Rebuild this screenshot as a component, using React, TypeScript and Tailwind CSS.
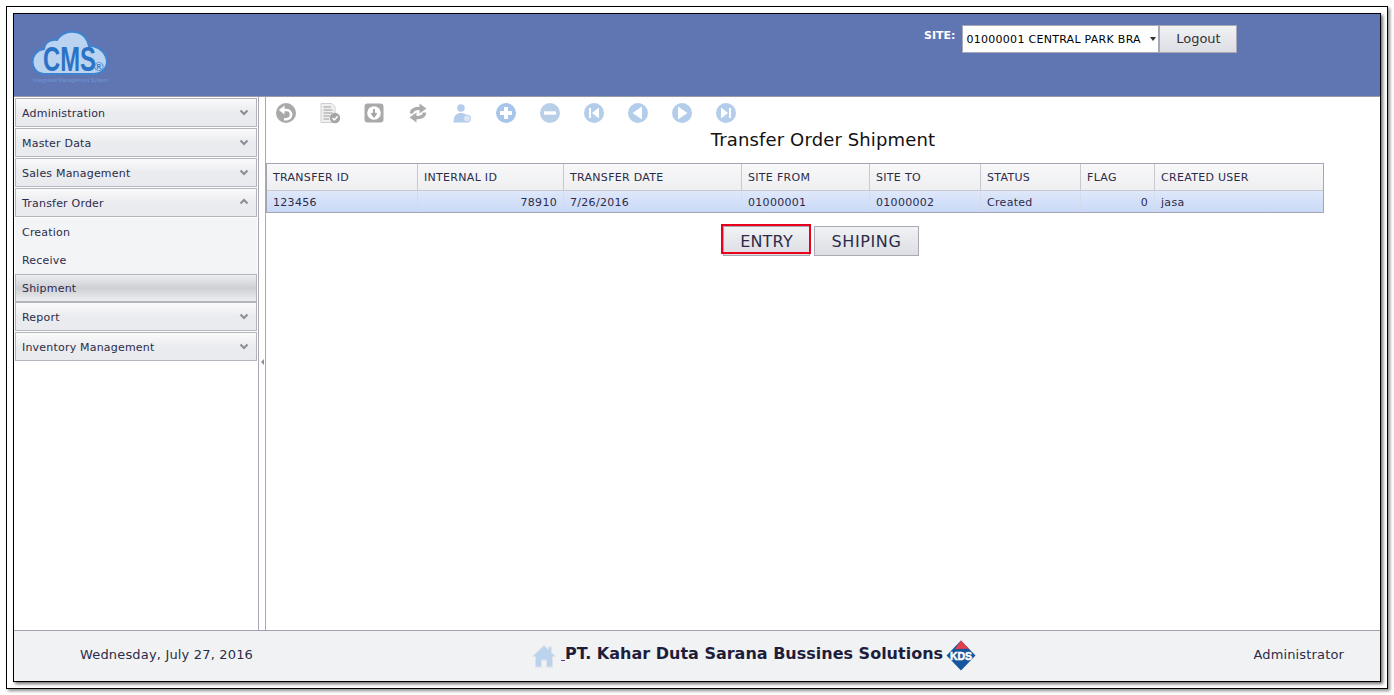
const F = "font-['DejaVu_Sans',Verdana,sans-serif]";

function Chevron({ up }: { up?: boolean }) {
  return (
    <svg width="10" height="8" viewBox="0 0 10 8" className="mb-[2px] shrink-0">
      <path d={up ? "M1.5 5.5 L5 2 L8.5 5.5" : "M1.5 2.5 L5 6 L8.5 2.5"} fill="none" stroke="#8a8c96" strokeWidth="2" />
    </svg>
  );
}

function Acc({ label, up }: { label: string; up?: boolean }) {
  return (
    <div className="mb-px flex h-[29px] items-center justify-between border border-[#b4b4bd] bg-gradient-to-b from-[#fafafb] via-[#ebecef] to-[#e9eaed] pl-[6px] pr-[7px] text-[11px] tracking-[0.2px] text-[#2c2c4a]">
      <span className="pt-[4px]">{label}</span>
      <Chevron up={up} />
    </div>
  );
}

function Circle({ fill, children }: { fill: string; children: React.ReactNode }) {
  return (
    <svg width="22" height="22" viewBox="0 0 22 22">
      <circle cx="11" cy="11" r="10" fill={fill} />
      {children}
    </svg>
  );
}

const blue = "#b3cdeb";
const toolbar = [
  <Circle key="back" fill="#a9a9a9">
    <path d="M8 8 H11.5 A4.6 4.6 0 0 1 11.5 17.2 H9" fill="none" stroke="#fff" strokeWidth="2.6" />
    <path d="M9.5 3.5 L3.8 8 L9.5 12.5 Z" fill="#fff" />
  </Circle>,
  <svg key="doc" width="22" height="22" viewBox="0 0 22 22">
    <path d="M2 1.5 H13 L16 4.5 V20.5 H2 Z" fill="#f0f0f0" stroke="#cfcfcf" />
    <path d="M4.5 5 H12 M4.5 8 H13.5 M4.5 11 H13.5 M4.5 14 H11 M4.5 17 H10" stroke="#b8b8b8" strokeWidth="1.3" />
    <circle cx="16" cy="16" r="5.2" fill="#a5a5a5" />
    <path d="M13.5 16 L15.4 18 L18.6 14.3" fill="none" stroke="#fff" strokeWidth="1.4" />
  </svg>,
  <svg key="save" width="22" height="22" viewBox="0 0 22 22">
    <rect x="1.5" y="1.5" width="19" height="19" rx="3" fill="#a9a9a9" />
    <circle cx="11" cy="11" r="6.8" fill="#fff" />
    <path d="M11 7 V13 M8.5 11 L11 14.5 L13.5 11" fill="none" stroke="#a0a0a0" strokeWidth="1.8" />
  </svg>,
  <svg key="refresh" width="22" height="22" viewBox="0 0 22 22">
    <path d="M4.5 11.5 C4.5 8 8 6 14 6.5" fill="none" stroke="#ababab" strokeWidth="3.4" />
    <path d="M12.5 1.5 L19.5 6.5 L12.5 11.5 Z" fill="#ababab" />
    <path d="M17.5 10.5 C17.5 14 14 16 8 15.5" fill="none" stroke="#ababab" strokeWidth="3.4" />
    <path d="M9.5 20.5 L2.5 15.5 L9.5 10.5 Z" fill="#ababab" />
  </svg>,
  <svg key="user" width="22" height="22" viewBox="0 0 22 22">
    <circle cx="10" cy="6" r="3.8" fill="#b3cdeb" />
    <path d="M2.5 20.5 C2.5 13 6 11 10 11 C14 11 17.5 13 17.5 20.5 Z" fill="#b3cdeb" />
    <circle cx="16" cy="16.5" r="3.6" fill="#dbe6f3" stroke="#b3cdeb" />
  </svg>,
  <Circle key="plus" fill="#a8c6ea">
    <path d="M11 5 V17 M5 11 H17" stroke="#fff" strokeWidth="4" />
  </Circle>,
  <Circle key="minus" fill="#b9cfe8">
    <path d="M5 11 H17" stroke="#fff" strokeWidth="3.4" />
  </Circle>,
  <Circle key="first" fill={blue}>
    <path d="M7 6 V16" stroke="#fff" strokeWidth="2" />
    <path d="M16 5.5 L9 11 L16 16.5 Z" fill="#fff" />
  </Circle>,
  <Circle key="prev" fill={blue}>
    <path d="M15 4.5 L5.5 11 L15 17.5 Z" fill="#fff" />
  </Circle>,
  <Circle key="next" fill={blue}>
    <path d="M7 4.5 L16.5 11 L7 17.5 Z" fill="#fff" />
  </Circle>,
  <Circle key="last" fill={blue}>
    <path d="M15 6 V16" stroke="#fff" strokeWidth="2" />
    <path d="M6 5.5 L13 11 L6 16.5 Z" fill="#fff" />
  </Circle>,
];

const cols: [string, string, number, boolean?][] = [
  ["TRANSFER ID", "123456", 151],
  ["INTERNAL ID", "78910", 146, true],
  ["TRANSFER DATE", "7/26/2016", 178],
  ["SITE FROM", "01000001", 128],
  ["SITE TO", "01000002", 111],
  ["STATUS", "Created", 100],
  ["FLAG", "0", 74, true],
  ["CREATED USER", "jasa", 168],
];

function Logo() {
  return (
    <div className="relative h-[52px] w-[78px]">
      <svg width="78" height="46" viewBox="0 0 78 46" className="block">
        <path
          d="M14 44 C5 44 1.5 37 1.5 32 C1.5 25 6 20 13 19 C14 12 20 9 26 10 C30 3 38 1 44 2 C52 3 57 9 58 16 C66 15 75 22 76 31 C76 39 70 44 62 44 Z"
          fill="#b9d3f0"
          stroke="#3f82cf"
          strokeWidth="2"
        />
      </svg>
      <span className="absolute left-[12px] top-[11px] origin-left scale-x-[0.68] font-['Liberation_Sans',Arial,sans-serif] text-[35px] leading-[36px] font-bold text-[#2a72c6] whitespace-nowrap">
        CMS
      </span>
      <span className="absolute left-[63px] top-[30px] font-['Liberation_Sans',Arial,sans-serif] text-[13px] leading-[14px] font-bold text-[#3f82cf]">®</span>
      <span className="absolute left-[2px] top-[47px] whitespace-nowrap font-['Liberation_Sans',Arial,sans-serif] text-[5px] leading-[6px] tracking-[0.15px] text-[#6f9ad8]">
        Integrated Management System
      </span>
    </div>
  );
}

function Kds() {
  return (
    <svg width="30" height="31" viewBox="0 0 30 31">
      <path d="M15 0.5 L29.5 15.5 L15 30.5 L0.5 15.5 Z" fill="#15569e" />
      <path d="M15 0.5 L23 8.8 L9 9 Z" fill="#e0404a" />
      <text
        x="15"
        y="19.5"
        textAnchor="middle"
        fontSize="10.5"
        fontWeight="700"
        fill="#fff"
        stroke="#fff"
        strokeWidth="0.5"
        fontFamily="Liberation Sans"
      >
        KDS
      </text>
    </svg>
  );
}

export default function App() {
  return (
    <div className={`${F} h-[695px] w-[1394px] overflow-hidden bg-white px-[6px] pt-[6px]`}>
      <div className="h-[683px] w-[1382px] border border-black p-[6px] shadow-[2px_2px_3px_rgba(0,0,0,0.45)]">
        <div className="flex h-[669px] w-[1368px] flex-col border border-black bg-white shadow-[2px_2px_3px_rgba(0,0,0,0.55)]">
          <header className="flex h-[83px] shrink-0 border-b border-[#9a9aaa] bg-[#6076b2]">
            <div className="ml-[17px] mt-[16px]">
              <Logo />
            </div>
            <div className="ml-[815px] mt-[11px] flex h-[28px] items-start">
              <span className="mr-[7px] mt-[4px] text-[11px] leading-[14px] font-bold text-white">SITE:</span>
              <div className="flex h-[28px] w-[197px] items-center justify-between border border-[#a9a9b5] bg-white pl-[3px] pr-[2px] text-[11px] tracking-[0.28px] text-black">
                <span className="pt-[2px]">01000001 CENTRAL PARK BRA</span>
                <span className="h-0 w-0 border-x-[3.5px] border-t-[4px] border-x-transparent border-t-[#333]" />
              </div>
              <button className="h-[28px] w-[78px] border border-[#a9a9b5] bg-gradient-to-b from-[#f1f2f4] to-[#dcdee4] text-[13px] text-[#333]">
                Logout
              </button>
            </div>
          </header>

          <div className="flex min-h-0 flex-1">
            <aside className="w-[244px] shrink-0 bg-white pl-px pr-px pt-[1px]">
              <Acc label="Administration" />
              <Acc label="Master Data" />
              <Acc label="Sales Management" />
              <Acc label="Transfer Order" up />
              <div className="bg-[#f3f4f6] text-[11px] tracking-[0.2px] text-[#2c2c4a]">
                <div className="flex h-[28px] items-center pl-[7px] pt-[2px]">Creation</div>
                <div className="flex h-[28px] items-center pl-[7px] pt-[2px]">Receive</div>
                <div className="flex h-[28px] items-center border border-[#b4b4bd] bg-gradient-to-b from-[#ecedef] via-[#cfd0d6] to-[#eceded] pl-[6px] pt-[2px]">
                  Shipment
                </div>
              </div>
              <Acc label="Report" />
              <Acc label="Inventory Management" />
            </aside>

            <div className="flex w-[8px] shrink-0 items-center border-x border-[#a9a9b5] bg-white">
              <span className="ml-[2px] mb-[3px] h-0 w-0 border-y-[3px] border-r-[3px] border-y-transparent border-r-[#8a8c96]" />
            </div>

            <main className="min-w-0 flex-1">
              <div className="flex h-[31px] items-center gap-[22px] pl-[9px] pt-[1px]">
                {toolbar}
              </div>
              <h1 className="h-[24px] text-center text-[18px] leading-[24px] font-normal tracking-[0.13px] text-[#111]">
                Transfer Order Shipment
              </h1>
              <div className="mt-[11px] w-[1058px] border border-[#a4a4b2] text-[11px] tracking-[0.3px] text-[#2c2c4a]">
                <div className="flex h-[27px] border-b border-[#c8c8d0] bg-gradient-to-b from-[#f8f8f9] to-[#eeeff1]">
                  {cols.map(([h, , w], i) => (
                    <div
                      key={h}
                      style={{ width: w }}
                      className={`flex shrink-0 items-center px-[6px] pt-[3px] ${i < 7 ? "border-r border-[#c8c8d0]" : ""}`}
                    >
                      {h}
                    </div>
                  ))}
                </div>
                <div className="flex h-[21px] bg-gradient-to-b from-[#dfe8fb] to-[#c9d9f6]">
                  {cols.map(([h, v, w, right], i) => (
                    <div
                      key={h}
                      style={{ width: w }}
                      className={`flex shrink-0 items-center px-[6px] pt-[3px] ${right ? "justify-end" : ""} ${i < 7 ? "border-r border-[#d5dbe8]" : ""}`}
                    >
                      {v}
                    </div>
                  ))}
                </div>
              </div>
              <div className="mt-[13px] flex justify-center gap-[4px] pr-[4px]">
                <div className="relative">
                  <button className="h-[30px] w-[87px] border border-[#a9a9b5] bg-gradient-to-b from-[#f1f2f4] to-[#dcdee4] pt-[2px] text-[16px] tracking-[0.2px] text-[#2c2c4a]">
                    ENTRY
                  </button>
                  <div className="absolute left-[-2px] top-[-2px] h-[30px] w-[90px] border-2 border-[#e8001c]" />
                </div>
                <button className="h-[30px] w-[105px] border border-[#a9a9b5] bg-gradient-to-b from-[#f1f2f4] to-[#dcdee4] pt-[2px] text-[16px] tracking-[0.6px] text-[#2c2c4a]">
                  SHIPING
                </button>
              </div>
            </main>
          </div>

          <footer className="flex h-[51px] shrink-0 items-center border-t border-[#a0a0b0] bg-[#f1f2f4] pb-[2px] text-[#2c2c4a]">
            <span className="ml-[66px] w-[452px] shrink-0 text-[13px] tracking-[0.17px]">Wednesday, July 27, 2016</span>
            <div className="flex items-center">
              <svg width="24" height="24" viewBox="0 0 24 24" className="mt-[2px]">
                <path d="M12 1.5 L16.5 5.8 V3 H19.5 V8.7 L23.5 12.5 L20.5 12.5 L20.5 23 L14.5 23 L14.5 16 L9.5 16 L9.5 23 L3.5 23 L3.5 12.5 L0.5 12.5 Z" fill="#bcd3ee" stroke="#dfe3e8" />
              </svg>
              <span className="ml-[5px] mt-[10px] h-px w-[4px] bg-[#5a3fa0]" />
              <span className="mb-[3px] text-[16px] font-bold text-[#1e1e3c]">PT. Kahar Duta Sarana Bussines Solutions</span>
              <div className="ml-[3px] mt-px">
                <Kds />
              </div>
            </div>
            <span className="ml-auto mr-[36px] text-[13px] tracking-[0.15px]">Administrator</span>
          </footer>
        </div>
      </div>
    </div>
  );
}
